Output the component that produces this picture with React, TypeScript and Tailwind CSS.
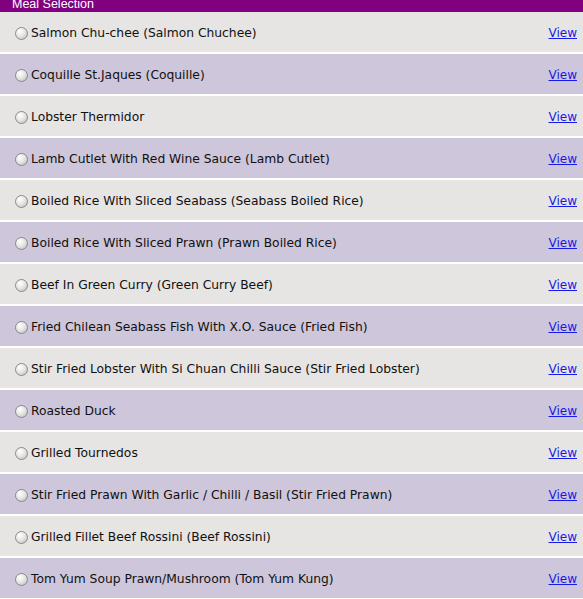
const meals = [
  "Salmon Chu-chee (Salmon Chuchee)",
  "Coquille St.Jaques (Coquille)",
  "Lobster Thermidor",
  "Lamb Cutlet With Red Wine Sauce (Lamb Cutlet)",
  "Boiled Rice With Sliced Seabass (Seabass Boiled Rice)",
  "Boiled Rice With Sliced Prawn (Prawn Boiled Rice)",
  "Beef In Green Curry (Green Curry Beef)",
  "Fried Chilean Seabass Fish With X.O. Sauce (Fried Fish)",
  "Stir Fried Lobster With Si Chuan Chilli Sauce (Stir Fried Lobster)",
  "Roasted Duck",
  "Grilled Tournedos",
  "Stir Fried Prawn With Garlic / Chilli / Basil (Stir Fried Prawn)",
  "Grilled Fillet Beef Rossini (Beef Rossini)",
  "Tom Yum Soup Prawn/Mushroom (Tom Yum Kung)",
];

function Radio() {
  return (
    <span className="inline-block w-[13px] h-[13px] rounded-full border border-[#8a8a8a] bg-[radial-gradient(circle_at_35%_30%,#ffffff_0%,#e4e4e4_50%,#b4b4b4_100%)] shrink-0" />
  );
}

export default function App() {
  return (
    <div className="w-[583px] h-[599px] overflow-hidden bg-white font-['DejaVu_Sans',Verdana,sans-serif]">
      <div className="h-[12px] bg-[#800080] overflow-hidden">
        <div className="pl-[12px] -mt-[3px] text-[12.5px] leading-[15px] text-white font-['Liberation_Sans',Arial,sans-serif]">
          Meal Selection
        </div>
      </div>
      {meals.map((m, i) => (
        <div
          key={m}
          className={`h-[40px] mb-[2px] flex items-center justify-between pl-[15px] pr-[6px] ${
            i % 2 === 0 ? "bg-[#e6e5e3]" : "bg-[#cec6da]"
          }`}
        >
          <label className="flex items-center gap-[3px] pt-[3px] text-[12.3px] text-[#111]">
            <Radio />
            <span>{m}</span>
          </label>
          <a href="#" className="pt-[2px] text-[12px] text-[#1a1ae6] underline">
            View
          </a>
        </div>
      ))}
    </div>
  );
}
